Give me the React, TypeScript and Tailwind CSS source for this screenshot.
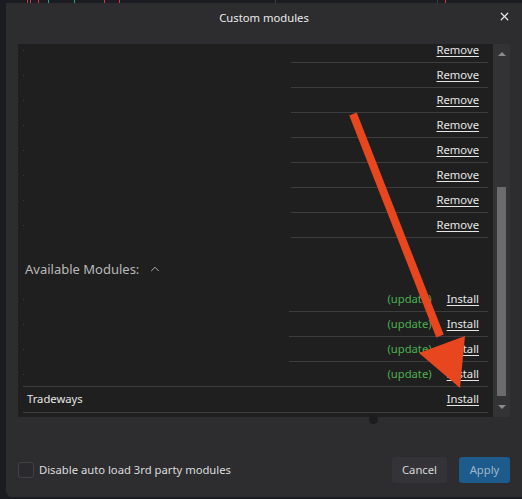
import { X, ChevronUp } from "lucide-react";

const installed = Array.from({ length: 8 });
const updates = Array.from({ length: 4 });

// bits of the price chart that peek out above the dialog
const ticks = [
  { x: 27, c: "bg-[#d8344a]" },
  { x: 30, c: "bg-[#d8344a]" },
  { x: 38, c: "bg-[#d8344a]" },
  { x: 48, c: "bg-[#2fa37a]" },
  { x: 74, c: "bg-[#2fa37a]" },
  { x: 104, c: "bg-[#d8344a]" },
  { x: 119, c: "bg-[#e0304a]" },
  { x: 275, c: "bg-[#3a3d48]" },
  { x: 437, c: "bg-[#3a3d48]" },
  { x: 445, c: "bg-[#d8344a]" },
];

function LinkText({ children }: { children: React.ReactNode }) {
  return <span className="text-[#e6e6e6] underline underline-offset-2 cursor-pointer">{children}</span>;
}

export default function App() {
  return (
    <div
      className="relative w-[522px] h-[499px] overflow-hidden bg-[#1b1c22] flex flex-col text-[11.25px]"
      style={{ fontFamily: '"Noto Sans", "Open Sans", sans-serif' }}
    >
      <div className="relative h-[3px] shrink-0">
        {ticks.map((t, i) => (
          <span key={i} className={`absolute top-0 h-[3px] w-px ${t.c}`} style={{ left: t.x }} />
        ))}
      </div>

      <div className="flex-1 ml-[6px] mb-[2px] bg-[#2d2d30] rounded-bl-md flex flex-col">
        {/* header */}
        <div className="relative h-[41px] shrink-0 flex justify-center pt-[7px]">
          <span className="text-[#ececec]">Custom modules</span>
          <X className="absolute right-[11px] top-[7px] w-[13px] h-[13px] text-[#e8e8e8]" strokeWidth={2.2} />
        </div>

        {/* module list */}
        <div className="mx-[12px] h-[373px] flex shrink-0">
          <div className="w-[475px] bg-[#1f1f1f] overflow-hidden px-[5px]">
            <div className="-mt-[6px]">
              {installed.map((_, i) => (
                <div key={i} className="relative h-[25px] flex items-center justify-end pr-[9px]">
                  <LinkText>Remove</LinkText>
                  <span className="absolute left-0 top-[12px] w-px h-px bg-[#3a3a3a]" />
                  <span className="absolute left-[268px] right-0 bottom-0 h-px bg-[#3d3d40]" />
                </div>
              ))}

              <div className="h-[49px] flex items-end pb-[8px] pl-[2px] gap-[9px] text-[13px] text-[#b9b9b9]">
                <span>Available Modules:</span>
                <ChevronUp className="w-[14px] h-[14px] mb-[3px]" strokeWidth={1.6} />
              </div>

              {updates.map((_, i) => (
                <div key={i} className="relative h-[25px] flex items-center justify-end pr-[9px] gap-[15px]">
                  <span className="text-[#4caf50]">(update)</span>
                  <LinkText>Install</LinkText>
                  <span className="absolute left-0 top-[12px] w-px h-px bg-[#3a3a3a]" />
                  <span
                    className={`absolute right-0 bottom-0 h-px bg-[#3d3d40] ${i === 3 ? "left-0" : "left-[266px]"}`}
                  />
                </div>
              ))}

              <div className="h-[26px] flex items-center justify-between pl-[4px] pr-[9px] border-b border-[#3d3d40]">
                <span className="text-[#e6e6e6]">Tradeways</span>
                <LinkText>Install</LinkText>
              </div>
            </div>
          </div>

          {/* scrollbar */}
          <div className="w-[17px] bg-[#333336] flex flex-col items-center">
            <div className="h-[20px] flex items-center justify-center">
              <span className="w-0 h-0 border-x-[4px] border-x-transparent border-b-[4px] border-b-[#8a8a8a]" />
            </div>
            <div className="flex-1 w-full px-[4px] pt-[123px] pb-[1px]">
              <div className="w-full h-full bg-[#6b6b6b]" />
            </div>
            <div className="h-[20px] flex items-center justify-center">
              <span className="w-0 h-0 border-x-[4px] border-x-transparent border-t-[4px] border-t-[#8a8a8a]" />
            </div>
          </div>
        </div>

        {/* footer */}
        <div className="flex-1 flex items-end justify-between px-[12px] pb-[14px]">
          <label className="flex items-center gap-[5px] h-[26px] text-[#dcdcdc]">
            <span className="w-[16px] h-[16px] rounded-[3px] border border-[#424246] bg-[#2a2a2d]" />
            Disable auto load 3rd party modules
          </label>
          <div className="flex gap-[12px]">
            <button className="h-[26px] w-[55px] rounded-[3px] bg-[#343438] text-[#d8d8d8]">Cancel</button>
            <button className="h-[26px] w-[51px] rounded-[3px] bg-[#1c5b8b] text-[#9fb8cc]">Apply</button>
          </div>
        </div>
      </div>

      {/* resize grip dot under the list */}
      <span className="absolute left-[369px] top-[415px] w-[9px] h-[9px] rounded-full bg-[#1c1c1e]" />

      {/* annotation arrow */}
      <svg className="absolute inset-0 pointer-events-none" width="522" height="499">
        <line x1="353" y1="114" x2="440" y2="336" stroke="#e8461e" strokeWidth="8" />
        <polygon points="460,388 419,353 465,336" fill="#e8461e" />
      </svg>
    </div>
  );
}
